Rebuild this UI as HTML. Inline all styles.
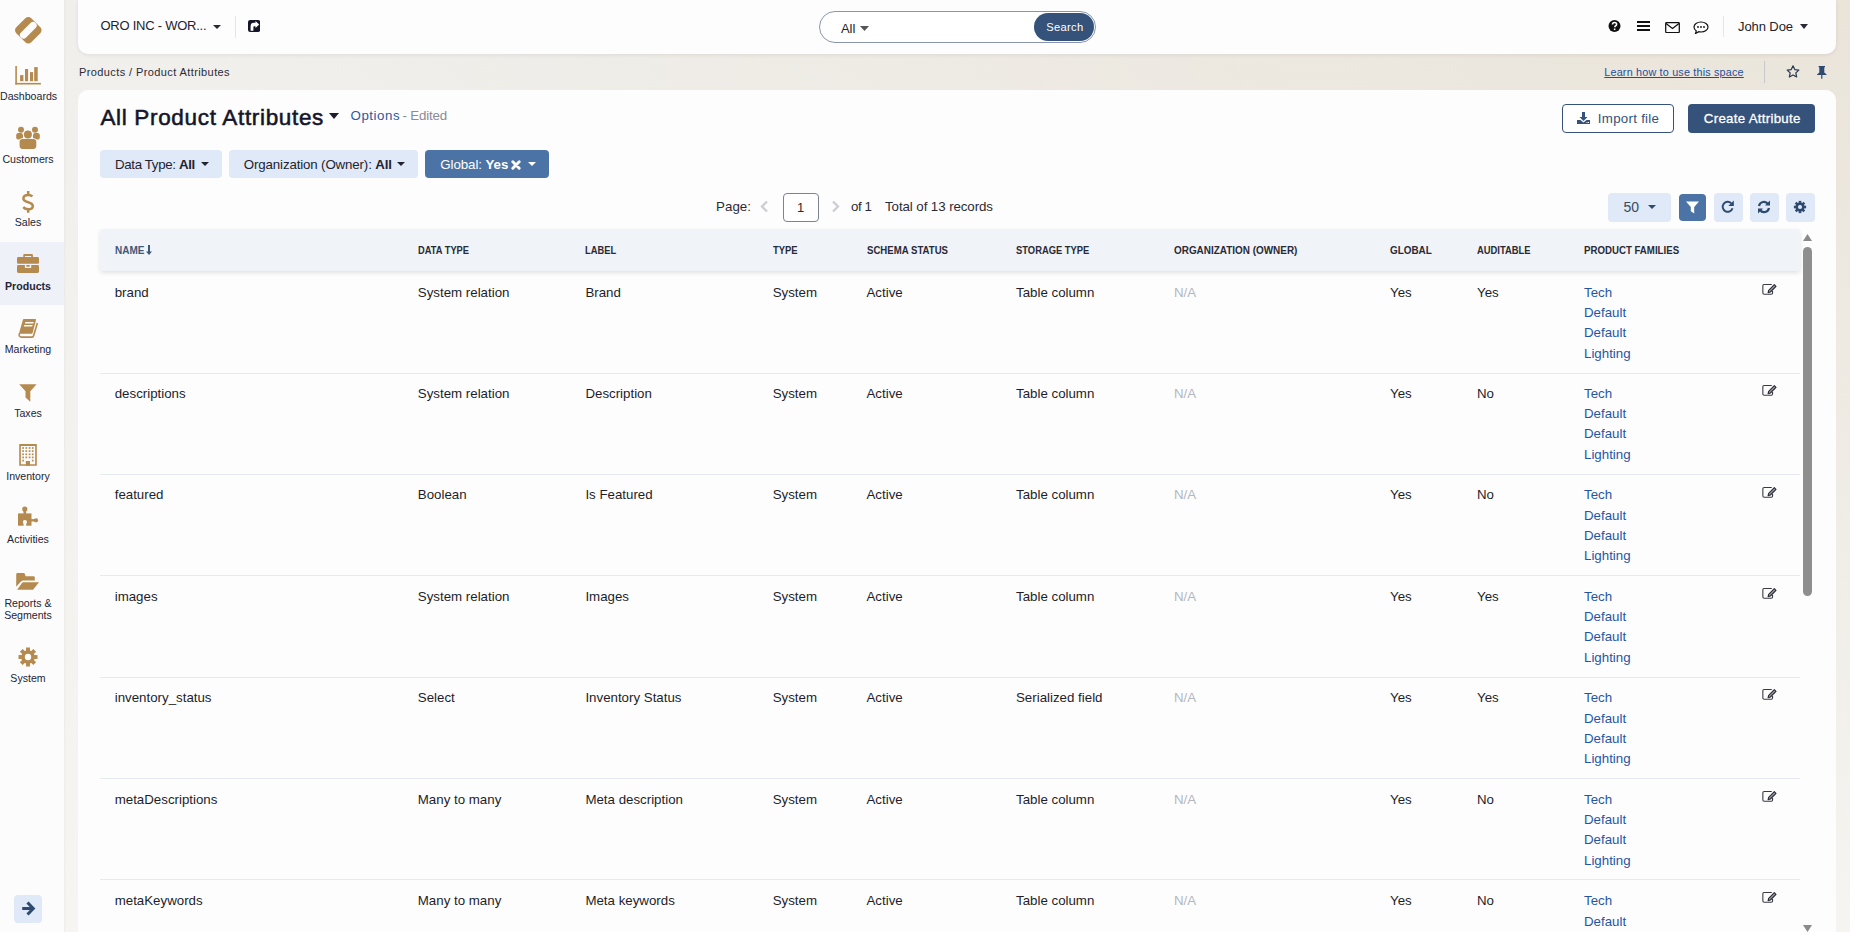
<!DOCTYPE html><html><head><meta charset="utf-8"><style>
*{box-sizing:border-box;margin:0;padding:0}
html,body{width:1850px;height:932px;overflow:hidden}
body{font-family:"Liberation Sans",sans-serif;color:#1d1d2b;background:radial-gradient(ellipse 120% 140% at 100% 0%,rgba(222,205,178,.32) 0%,rgba(222,205,178,0) 75%),linear-gradient(180deg,#f0efec 0%,#f6f5f2 100%);position:relative}
.abs{position:absolute}
.t{position:absolute;white-space:nowrap;line-height:1}
#side{position:absolute;left:0;top:0;width:64px;height:932px;background:#fcfcfc;box-shadow:1px 0 2px rgba(0,0,0,.04)}
.mi{position:absolute;left:0;width:64px;text-align:center}
.ml{position:absolute;left:0;width:56px;text-align:center;font-size:10.6px;color:#252535;line-height:12px;white-space:nowrap}
#hdr{position:absolute;left:78px;top:0;width:1758px;height:54px;background:#fdfdfd;border-radius:0 0 10px 10px;box-shadow:0 1px 4px rgba(0,0,0,.08)}
#card{position:absolute;left:78px;top:90px;width:1758px;height:860px;background:#fdfdfd;border-radius:10px 10px 0 0}
.btnl{position:absolute;background:#dfe9f7;border-radius:4px}
.hd{position:absolute;top:0;font-size:10px;font-weight:bold;color:#2a2a35;letter-spacing:-0.2px;white-space:nowrap;line-height:1}
.cell{position:absolute;font-size:13.3px;white-space:nowrap;line-height:1;color:#1d1d2b}
.sep{position:absolute;left:100px;width:1700px;height:1px;background:#e7eaf0}
</style></head><body>
<div id="side">
<svg class="abs" style="left:0px;top:0px" width="64" height="60" viewBox="0 0 64 60">
<rect x="17.7" y="19.6" width="21.2" height="21.2" rx="4.2" transform="rotate(45 28.3 30.2)" fill="#b58a4f"/>
<rect x="18.0" y="26.6" width="20.6" height="7.2" rx="3.6" transform="rotate(-45 28.3 30.2)" fill="#fcfcfc"/></svg>
<div class="abs" style="left:0;top:242px;width:64px;height:63px;background:#eef2f8"></div>
<div class="ml" style="top:90.4px;font-weight:normal">Dashboards</div>
<div class="ml" style="top:153.4px;font-weight:normal">Customers</div>
<div class="ml" style="top:216.4px;font-weight:normal">Sales</div>
<div class="ml" style="top:280.4px;font-weight:bold">Products</div>
<div class="ml" style="top:343.4px;font-weight:normal">Marketing</div>
<div class="ml" style="top:407.4px;font-weight:normal">Taxes</div>
<div class="ml" style="top:470.4px;font-weight:normal">Inventory</div>
<div class="ml" style="top:533.4px;font-weight:normal">Activities</div>
<div class="ml" style="top:596.9px">Reports &amp;</div>
<div class="ml" style="top:609.4px">Segments</div>
<div class="ml" style="top:672.0px">System</div>
<svg class="abs" style="left:15px;top:65px" width="27" height="21" viewBox="0 0 27 21" fill="#b58a4f">
<rect x="0.3" y="1" width="1.6" height="18.5"/><rect x="0.3" y="17.9" width="25.6" height="1.6"/>
<rect x="5.1" y="10.1" width="3.3" height="6.1"/><rect x="10" y="4" width="3.1" height="12.2"/><rect x="15" y="7.1" width="3.1" height="9.1"/><rect x="19.2" y="2.1" width="3.5" height="14.1"/></svg>
<svg class="abs" style="left:12px;top:122px" width="32" height="30" viewBox="0 0 32 30">
<g fill="#b58a4f"><circle cx="9" cy="7.7" r="3"/><circle cx="23" cy="7.7" r="3"/>
<rect x="4.2" y="11.1" width="6.8" height="6.5" rx="2.2"/><rect x="21" y="11.1" width="6.8" height="6.5" rx="2.2"/></g>
<circle cx="15.9" cy="12.6" r="5" fill="#fcfcfc"/><rect x="6.8" y="16.2" width="18.3" height="11.5" rx="3.6" fill="#fcfcfc"/>
<g fill="#b58a4f"><circle cx="15.9" cy="12.6" r="4"/><rect x="7.6" y="17" width="16.7" height="9.9" rx="2.8"/></g></svg>
<svg class="abs" style="left:12px;top:188px" width="32" height="28" viewBox="0 0 32 28" fill="none" stroke="#b58a4f" stroke-width="2.5">
<path d="M20.4 8.4C19.3 7.3 17.9 6.9 16.2 6.9C13.6 6.9 11.4 8.2 11.4 10.6C11.4 13 13.6 13.6 16.2 14.3C19 15.1 20.8 16 20.8 18.3C20.8 20.6 18.6 21.3 16.2 21.3C14.3 21.3 12.5 20.6 11.2 19.1"/>
<path d="M16.2 2.9V6.9M16.2 21.3V24.8"/></svg>
<svg class="abs" style="left:12px;top:250px" width="32" height="28" viewBox="0 0 32 28">
<g fill="#b58a4f"><path d="M11.3 7.2V4.8Q11.3 3.9 12.2 3.9H20Q20.9 3.9 20.9 4.8V7.2H19.2V5.9H12.9V7.2Z"/>
<rect x="5" y="7.1" width="22" height="6.7" rx="1.4"/><rect x="5" y="15" width="22" height="8" rx="1.4"/></g>
<rect x="12.9" y="14.1" width="6.3" height="3.9" fill="#eef2f8"/><rect x="14.4" y="15" width="3.3" height="1.7" fill="#b58a4f"/></svg>
<svg class="abs" style="left:12px;top:314px" width="32" height="28" viewBox="0 0 32 28">
<path d="M11.9 5H23.2Q24.2 5 24 6L20.6 19Q20.4 19.8 19.5 19.8H6.9L10.9 5.8Q11.1 5 11.9 5Z" fill="#b58a4f"/>
<path d="M7.5 19.2Q6.4 23.1 9.6 23.1H20.2Q21.2 23.1 21.5 22.1L25.4 9" stroke="#b58a4f" stroke-width="1.6" fill="none"/>
<path d="M13.3 8H21.7L21.35 9.4H12.95Z M12.2 11.1H20.6L20.2 12.6H11.8Z" fill="#fcfcfc"/></svg>
<svg class="abs" style="left:12px;top:378px" width="32" height="28" viewBox="0 0 32 28">
<path d="M7.2 6.2H24.6L18.3 13.2V23.7L13.5 19.5V13.2Z" fill="#b58a4f"/></svg>
<svg class="abs" style="left:12px;top:440px" width="32" height="28" viewBox="0 0 32 28">
<path d="M7.2 4.1H24.8V25.8H7.2Z M8.85 5.9V24.3H23.15V5.9Z" fill="#b58a4f" fill-rule="evenodd"/>
<g fill="#b58a4f"><rect x="10.25" y="7.15" width="1.7" height="1.7"/><rect x="13.45" y="7.15" width="1.7" height="1.7"/><rect x="16.75" y="7.15" width="1.7" height="1.7"/><rect x="19.85" y="7.15" width="1.7" height="1.7"/><rect x="10.25" y="10.25" width="1.7" height="1.7"/><rect x="13.45" y="10.25" width="1.7" height="1.7"/><rect x="16.75" y="10.25" width="1.7" height="1.7"/><rect x="19.85" y="10.25" width="1.7" height="1.7"/><rect x="10.25" y="13.45" width="1.7" height="1.7"/><rect x="13.45" y="13.45" width="1.7" height="1.7"/><rect x="16.75" y="13.45" width="1.7" height="1.7"/><rect x="19.85" y="13.45" width="1.7" height="1.7"/><rect x="10.25" y="16.55" width="1.7" height="1.7"/><rect x="13.45" y="16.55" width="1.7" height="1.7"/><rect x="16.75" y="16.55" width="1.7" height="1.7"/><rect x="19.85" y="16.55" width="1.7" height="1.7"/><rect x="10.25" y="19.75" width="1.7" height="1.7"/><rect x="19.85" y="19.75" width="1.7" height="1.7"/><rect x="13.8" y="21" width="4.2" height="4.8"/></g></svg>
<svg class="abs" style="left:12px;top:502px" width="32" height="28" viewBox="0 0 32 28">
<g fill="#b58a4f"><rect x="6" y="11.4" width="13.5" height="12.3"/><circle cx="12.8" cy="7.1" r="2.6"/><rect x="11.5" y="8.5" width="2.6" height="3.5"/>
<circle cx="24" cy="18.3" r="2.1"/><rect x="19" y="17.1" width="4" height="2.4"/></g>
<circle cx="12.9" cy="20" r="2.1" fill="#fcfcfc"/><rect x="11.6" y="20" width="2.6" height="4" fill="#fcfcfc"/></svg>
<svg class="abs" style="left:12px;top:566px" width="32" height="28" viewBox="0 0 32 28" fill="#b58a4f">
<path d="M4.2 8.5Q4.2 7.1 5.6 7.1H11.8Q12.5 7.1 12.9 8L13.6 10.2H21.5Q22.8 10.2 22.8 11.5V14.4H11.5Q10 14.4 9 15.5L4.2 20.7Z"/>
<path d="M11.3 16.2H27L21 23.7H5.1L10 17Q10.5 16.2 11.3 16.2Z"/></svg>
<svg class="abs" style="left:18px;top:647px" width="20" height="20" viewBox="-10 -10 20 20">
<g fill="#b58a4f"><circle r="6.8"/><rect x="-1.95" y="-9.5" width="3.9" height="5" transform="rotate(0)"/><rect x="-1.95" y="-9.5" width="3.9" height="5" transform="rotate(45)"/><rect x="-1.95" y="-9.5" width="3.9" height="5" transform="rotate(90)"/><rect x="-1.95" y="-9.5" width="3.9" height="5" transform="rotate(135)"/><rect x="-1.95" y="-9.5" width="3.9" height="5" transform="rotate(180)"/><rect x="-1.95" y="-9.5" width="3.9" height="5" transform="rotate(225)"/><rect x="-1.95" y="-9.5" width="3.9" height="5" transform="rotate(270)"/><rect x="-1.95" y="-9.5" width="3.9" height="5" transform="rotate(315)"/></g><circle r="3.2" fill="#fcfcfc"/></svg>
<div class="abs" style="left:14px;top:895px;width:28px;height:28px;background:#dfe9f7;border-radius:4px"></div>
<svg class="abs" style="left:14px;top:895px" width="28" height="28" viewBox="0 0 28 28"><path d="M8.2 13.5H18.5M13.5 7.5L19.3 13.5L13.5 19.5" stroke="#2f4a70" stroke-width="3" fill="none"/></svg>
</div>
<div id="hdr"></div>
<div class="t" style="left:100.5px;top:19.49px;font-size:13px;color:#23232f;font-weight:normal;letter-spacing:-0.252px;">ORO INC - WOR...</div>
<svg class="abs" style="left:213px;top:25px" width="8" height="4"><path d="M0 0h8l-4 4z" fill="#2a2a35"/></svg>
<div class="abs" style="left:235px;top:16px;width:1px;height:22px;background:#e5e6ea"></div>
<svg class="abs" style="left:247.7px;top:19.9px" width="12.2" height="12" viewBox="0 0 12.2 12"><rect width="12.2" height="12" rx="2.2" fill="#15152a"/>
<path d="M2.6 10.8V6.2Q2.6 2.8 6 2.8H7.5V1L11.2 4.5L7.5 8V6.2H6.3Q5.4 6.2 5.4 7.1V10.8Z" fill="#fff"/></svg>
<div class="abs" style="left:819px;top:11px;width:277px;height:32px;border:1px solid #8a95ad;border-radius:16px;background:#fff"></div>
<div class="t" style="left:841px;top:21.69px;font-size:13px;color:#23232f;font-weight:normal;letter-spacing:-0.077px;">All</div>
<svg class="abs" style="left:860px;top:26px" width="9" height="5"><path d="M0 0h9l-4.5 5z" fill="#555"/></svg>
<div class="abs" style="left:1034px;top:13px;width:60px;height:28px;border-radius:14px;background:#34527a"></div>
<div class="t" style="left:1046.2px;top:21.85px;font-size:11.2px;color:#fff;font-weight:normal;letter-spacing:0.309px;">Search</div>
<svg class="abs" style="left:1608px;top:20px" width="13" height="12" viewBox="0 0 13 13"><circle cx="6.5" cy="6.5" r="6.5" fill="#111"/>
<path d="M4.3 5q0-2.3 2.3-2.3q2.2 0 2.2 2q0 1.2-1.3 1.8q-0.6 0.3-0.6 1v0.4" stroke="#fff" stroke-width="1.7" fill="none"/><rect x="5.8" y="9.2" width="1.7" height="1.7" fill="#fff"/></svg>
<svg class="abs" style="left:1637px;top:21px" width="13" height="10" viewBox="0 0 13 10"><rect y="0" width="13" height="2" fill="#111"/><rect y="4" width="13" height="2" fill="#111"/><rect y="8" width="13" height="2" fill="#111"/></svg>
<svg class="abs" style="left:1665px;top:22px" width="15" height="11" viewBox="0 0 15 11"><rect x="0.7" y="0.7" width="13.6" height="9.8" rx="0.8" stroke="#111" stroke-width="1.25" fill="none"/><path d="M1 1.4l6.5 5l6.5-5" stroke="#111" stroke-width="1.25" fill="none"/></svg>
<svg class="abs" style="left:1693px;top:21px" width="16" height="13" viewBox="0 0 16 13"><path d="M8 1c4 0 7 2.2 7 5s-3 5-7 5c-0.8 0-1.5-0.1-2.2-0.3l-3.3 1.8l0.8-2.6c-1.4-0.9-2.3-2.3-2.3-3.9c0-2.8 3-5 7-5z" stroke="#111" stroke-width="1.2" fill="none"/>
<circle cx="5" cy="6" r="0.9" fill="#111"/><circle cx="8" cy="6" r="0.9" fill="#111"/><circle cx="11" cy="6" r="0.9" fill="#111"/></svg>
<div class="abs" style="left:1723px;top:16px;width:1px;height:21px;background:#e5e6ea"></div>
<div class="t" style="left:1738px;top:19.59px;font-size:13px;color:#23232f;font-weight:normal;letter-spacing:-0.094px;">John Doe</div>
<svg class="abs" style="left:1800px;top:24px" width="8" height="5"><path d="M0 0h8l-4 5z" fill="#2a2a35"/></svg>
<div class="t" style="left:79px;top:67.02px;font-size:11px;color:#2b2b37;font-weight:normal;letter-spacing:0.400px;">Products / Product Attributes</div>
<div class="t" style="left:1604.3px;top:66.59px;font-size:10.8px;color:#1f4f9a;font-weight:normal;text-decoration:underline;letter-spacing:0.186px;">Learn how to use this space</div>
<div class="abs" style="left:1764px;top:61px;width:1px;height:22px;background:#c8c8cc"></div>
<svg class="abs" style="left:1786px;top:65px" width="14" height="13" viewBox="0 0 24 23"><path d="M12 1.5l3.1 6.6l7.2 0.9l-5.3 5l1.4 7.1l-6.4-3.5l-6.4 3.5l1.4-7.1l-5.3-5l7.2-0.9z" stroke="#2a3a55" stroke-width="2.2" fill="none" stroke-linejoin="round"/></svg>
<svg class="abs" style="left:1817.2px;top:66px" width="9.6" height="13" viewBox="0 0 9.6 13"><path d="M1.6 0H8V1.3H7.3V6.6L9.6 8.4V9H5.4V12.6L4.8 13L4.2 12.6V9H0V8.4L2.3 6.6V1.3H1.6Z" fill="#2f4a70"/></svg>
<div id="card"></div>
<div class="t" style="left:100.4px;top:106.81px;font-size:22.5px;color:#15152a;font-weight:normal;-webkit-text-stroke:0.55px #15152a;letter-spacing:0.673px;">All Product Attributes</div>
<svg class="abs" style="left:329px;top:113px" width="10" height="6"><path d="M0 0h10l-5 6z" fill="#1d1d2b"/></svg>
<div class="t" style="left:350.5px;top:108.84px;font-size:13.3px;color:#2a5aa0;font-weight:normal;letter-spacing:0.545px;">Options</div>
<div class="t" style="left:402.4px;top:108.84px;font-size:13.3px;color:#8b8b95;font-weight:normal;letter-spacing:-0.147px;">- Edited</div>
<div class="abs" style="left:1562px;top:104px;width:112px;height:29px;border:1.4px solid #34527a;border-radius:4px;background:#fff"></div>
<svg class="abs" style="left:1577px;top:112px" width="13" height="12" viewBox="0 0 13 12"><path d="M5 0h3v5h2.5l-4 4l-4-4h2.5z" fill="#34527a"/><path d="M0 8h3.5l3 2.5l3-2.5h3.5v4h-13z" fill="#34527a"/><rect x="9.5" y="10" width="1" height="1" fill="#fff"/><rect x="11" y="10" width="1" height="1" fill="#fff"/></svg>
<div class="t" style="left:1597.8px;top:111.54px;font-size:13.3px;color:#34527a;font-weight:normal;letter-spacing:0.281px;">Import file</div>
<div class="abs" style="left:1688px;top:104px;width:127px;height:29px;border-radius:4px;background:#34527a"></div>
<div class="t" style="left:1703.8px;top:111.74px;font-size:13.3px;color:#fff;font-weight:normal;-webkit-text-stroke:0.3px #fff;letter-spacing:0.281px;">Create Attribute</div>
<div class="btnl" style="left:100px;top:150px;width:122px;height:28px"></div>
<div class="t" style="left:115.1px;top:158.14px;font-size:13.3px;color:#23232f;font-weight:normal;letter-spacing:-0.359px;">Data Type: <b>All</b></div>
<svg class="abs" style="left:201px;top:162px" width="8" height="4"><path d="M0 0h8l-4 4z" fill="#23232f"/></svg>
<div class="btnl" style="left:229px;top:150px;width:189px;height:28px"></div>
<div class="t" style="left:243.8px;top:158.14px;font-size:13.3px;color:#23232f;font-weight:normal;letter-spacing:-0.138px;">Organization (Owner): <b>All</b></div>
<svg class="abs" style="left:397px;top:162px" width="8" height="4"><path d="M0 0h8l-4 4z" fill="#23232f"/></svg>
<div class="abs" style="left:425px;top:150px;width:124px;height:28px;background:#4b73a6;border-radius:4px"></div>
<div class="t" style="left:440.3px;top:158.14px;font-size:13.3px;color:#fff;font-weight:normal;letter-spacing:-0.077px;">Global: <b>Yes</b></div>
<svg class="abs" style="left:511px;top:160px" width="10" height="10" viewBox="0 0 10 10"><path d="M1.8 1.8L8.2 8.2M8.2 1.8L1.8 8.2" stroke="#fff" stroke-width="2.9" stroke-linecap="round"/></svg>
<svg class="abs" style="left:528px;top:162px" width="8" height="4"><path d="M0 0h8l-4 4z" fill="#fff"/></svg>
<div class="t" style="left:716px;top:200.44px;font-size:13.3px;color:#2a2a35;font-weight:normal;letter-spacing:0.062px;">Page:</div>
<svg class="abs" style="left:760px;top:200px" width="9" height="13" viewBox="0 0 9 13"><path d="M7 1.5l-5 5l5 5" stroke="#cbced4" stroke-width="2.3" fill="none"/></svg>
<div class="abs" style="left:783px;top:193px;width:36px;height:29px;border:1px solid #7a8499;border-radius:4px;background:#fff"></div>
<div class="t" style="left:797px;top:200.79px;font-size:13px;color:#2a2a35;font-weight:normal;">1</div>
<svg class="abs" style="left:831px;top:200px" width="9" height="13" viewBox="0 0 9 13"><path d="M2 1.5l5 5l-5 5" stroke="#cbced4" stroke-width="2.3" fill="none"/></svg>
<div class="t" style="left:851px;top:200.44px;font-size:13.3px;color:#2a2a35;font-weight:normal;letter-spacing:-0.396px;">of 1</div>
<div class="t" style="left:885px;top:200.44px;font-size:13.3px;color:#2a2a35;font-weight:normal;letter-spacing:-0.077px;">Total of 13 records</div>
<div class="btnl" style="left:1608px;top:193px;width:63px;height:29px"></div>
<div class="t" style="left:1623.4px;top:199.93px;font-size:14px;color:#3a4a60;font-weight:normal;">50</div>
<svg class="abs" style="left:1648px;top:205px" width="8" height="4"><path d="M0 0h8l-4 4z" fill="#2f4a70"/></svg>
<div class="abs" style="left:1679px;top:194px;width:27px;height:27px;background:#4b73a6;border-radius:4px"></div>
<svg class="abs" style="left:1686px;top:201px" width="13" height="13" viewBox="0 0 13 13"><path d="M0 0.5h13l-4.8 5.5v6.5l-3.4-2.3v-4.2z" fill="#fff"/></svg>
<div class="btnl" style="left:1714px;top:193px;width:29px;height:29px"></div>
<div class="btnl" style="left:1750px;top:193px;width:29px;height:29px"></div>
<div class="btnl" style="left:1786px;top:193px;width:29px;height:29px"></div>
<svg class="abs" style="left:1721px;top:200px" width="14" height="14" viewBox="0 0 14 14"><path d="M11.5 8.2a5 5 0 1 1-1.3-5" stroke="#2f4a70" stroke-width="1.9" fill="none"/><path d="M12.8 0.5v5.5h-5.5z" fill="#2f4a70"/></svg>
<svg class="abs" style="left:1757px;top:200px" width="14" height="14" viewBox="0 0 14 14"><path d="M2 6a5 5 0 0 1 9-2" stroke="#2f4a70" stroke-width="2.2" fill="none"/><path d="M13 0.5v5h-5z" fill="#2f4a70"/><path d="M12 8a5 5 0 0 1-9 2" stroke="#2f4a70" stroke-width="2.2" fill="none"/><path d="M1 13.5v-5h5z" fill="#2f4a70"/></svg>
<svg class="abs" style="left:1793px;top:200px" width="14" height="14" viewBox="-7 -7 14 14">
<g fill="#2f4a70"><circle r="4.5"/><rect x="-1.3" y="-6.1" width="2.6" height="3" transform="rotate(0)"/><rect x="-1.3" y="-6.1" width="2.6" height="3" transform="rotate(45)"/><rect x="-1.3" y="-6.1" width="2.6" height="3" transform="rotate(90)"/><rect x="-1.3" y="-6.1" width="2.6" height="3" transform="rotate(135)"/><rect x="-1.3" y="-6.1" width="2.6" height="3" transform="rotate(180)"/><rect x="-1.3" y="-6.1" width="2.6" height="3" transform="rotate(225)"/><rect x="-1.3" y="-6.1" width="2.6" height="3" transform="rotate(270)"/><rect x="-1.3" y="-6.1" width="2.6" height="3" transform="rotate(315)"/></g><circle r="2" fill="#dfe9f7"/></svg>

<div class="abs" style="left:100px;top:229px;width:1700px;height:42px;background:#f0f3f8;border-radius:3px;box-shadow:0 2px 4px rgba(0,0,0,.11)"></div>
<div class="t" style="left:114.7px;top:245.71px;font-size:10.2px;color:#3d5878;font-weight:bold;transform:scaleX(0.9800);transform-origin:0 0;">NAME</div>
<div class="t" style="left:417.8px;top:245.71px;font-size:10.2px;color:#2a2a35;font-weight:bold;transform:scaleX(0.9133);transform-origin:0 0;">DATA TYPE</div>
<div class="t" style="left:585.4px;top:245.71px;font-size:10.2px;color:#2a2a35;font-weight:bold;transform:scaleX(0.9155);transform-origin:0 0;">LABEL</div>
<div class="t" style="left:772.7px;top:245.71px;font-size:10.2px;color:#2a2a35;font-weight:bold;transform:scaleX(0.9245);transform-origin:0 0;">TYPE</div>
<div class="t" style="left:866.5px;top:245.71px;font-size:10.2px;color:#2a2a35;font-weight:bold;transform:scaleX(0.9436);transform-origin:0 0;">SCHEMA STATUS</div>
<div class="t" style="left:1016px;top:245.71px;font-size:10.2px;color:#2a2a35;font-weight:bold;transform:scaleX(0.9216);transform-origin:0 0;">STORAGE TYPE</div>
<div class="t" style="left:1174px;top:245.71px;font-size:10.2px;color:#2a2a35;font-weight:bold;transform:scaleX(0.9749);transform-origin:0 0;">ORGANIZATION (OWNER)</div>
<div class="t" style="left:1390px;top:245.71px;font-size:10.2px;color:#2a2a35;font-weight:bold;transform:scaleX(0.9694);transform-origin:0 0;">GLOBAL</div>
<div class="t" style="left:1477px;top:245.71px;font-size:10.2px;color:#2a2a35;font-weight:bold;transform:scaleX(0.9224);transform-origin:0 0;">AUDITABLE</div>
<div class="t" style="left:1584px;top:245.71px;font-size:10.2px;color:#2a2a35;font-weight:bold;transform:scaleX(0.9492);transform-origin:0 0;">PRODUCT FAMILIES</div>
<svg class="abs" style="left:146px;top:245px" width="6" height="10" viewBox="0 0 6 10"><path d="M2 0h2v6.5h2l-3 3.5l-3-3.5h2z" fill="#3d5878"/></svg>
<div class="t" style="left:114.7px;top:285.94px;font-size:13.3px;color:#1d1d2b;font-weight:normal;">brand</div>
<div class="t" style="left:417.8px;top:285.94px;font-size:13.3px;color:#1d1d2b;font-weight:normal;">System relation</div>
<div class="t" style="left:585.4px;top:285.94px;font-size:13.3px;color:#1d1d2b;font-weight:normal;">Brand</div>
<div class="t" style="left:772.7px;top:285.94px;font-size:13.3px;color:#1d1d2b;font-weight:normal;">System</div>
<div class="t" style="left:866.5px;top:285.94px;font-size:13.3px;color:#1d1d2b;font-weight:normal;">Active</div>
<div class="t" style="left:1016px;top:285.94px;font-size:13.3px;color:#1d1d2b;font-weight:normal;">Table column</div>
<div class="t" style="left:1174px;top:285.94px;font-size:13.3px;color:#b3b7bf;font-weight:normal;">N/A</div>
<div class="t" style="left:1390px;top:285.94px;font-size:13.3px;color:#1d1d2b;font-weight:normal;">Yes</div>
<div class="t" style="left:1477px;top:285.94px;font-size:13.3px;color:#1d1d2b;font-weight:normal;">Yes</div>
<div class="t" style="left:1584px;top:285.94px;font-size:13.3px;color:#1f56a5;font-weight:normal;">Tech</div>
<div class="t" style="left:1584px;top:306.34px;font-size:13.3px;color:#1f56a5;font-weight:normal;">Default</div>
<div class="t" style="left:1584px;top:326.44px;font-size:13.3px;color:#1f56a5;font-weight:normal;">Default</div>
<div class="t" style="left:1584px;top:346.94px;font-size:13.3px;color:#1f56a5;font-weight:normal;">Lighting</div>
<svg class="abs" style="left:1756px;top:278.2px" width="28" height="24" viewBox="0 0 28 24"><path d="M15.8 6.45H8.1Q6.85 6.45 6.85 7.7V15Q6.85 16.25 8.1 16.25H15.3Q16.55 16.25 16.55 15V13.1" stroke="#3a3a44" stroke-width="1.1" fill="none"/><path d="M12.1 14.6L12.7 12.3L18.3 6.7L20 8.4L14.4 14Z" stroke="#2a2a35" stroke-width="1.1" fill="#9a9aa5" stroke-linejoin="round"/></svg>
<div class="sep" style="top:373.0px"></div>
<div class="t" style="left:114.7px;top:386.84px;font-size:13.3px;color:#1d1d2b;font-weight:normal;">descriptions</div>
<div class="t" style="left:417.8px;top:386.84px;font-size:13.3px;color:#1d1d2b;font-weight:normal;">System relation</div>
<div class="t" style="left:585.4px;top:386.84px;font-size:13.3px;color:#1d1d2b;font-weight:normal;">Description</div>
<div class="t" style="left:772.7px;top:386.84px;font-size:13.3px;color:#1d1d2b;font-weight:normal;">System</div>
<div class="t" style="left:866.5px;top:386.84px;font-size:13.3px;color:#1d1d2b;font-weight:normal;">Active</div>
<div class="t" style="left:1016px;top:386.84px;font-size:13.3px;color:#1d1d2b;font-weight:normal;">Table column</div>
<div class="t" style="left:1174px;top:386.84px;font-size:13.3px;color:#b3b7bf;font-weight:normal;">N/A</div>
<div class="t" style="left:1390px;top:386.84px;font-size:13.3px;color:#1d1d2b;font-weight:normal;">Yes</div>
<div class="t" style="left:1477px;top:386.84px;font-size:13.3px;color:#1d1d2b;font-weight:normal;">No</div>
<div class="t" style="left:1584px;top:386.84px;font-size:13.3px;color:#1f56a5;font-weight:normal;">Tech</div>
<div class="t" style="left:1584px;top:407.24px;font-size:13.3px;color:#1f56a5;font-weight:normal;">Default</div>
<div class="t" style="left:1584px;top:427.34px;font-size:13.3px;color:#1f56a5;font-weight:normal;">Default</div>
<div class="t" style="left:1584px;top:447.84px;font-size:13.3px;color:#1f56a5;font-weight:normal;">Lighting</div>
<svg class="abs" style="left:1756px;top:379.1px" width="28" height="24" viewBox="0 0 28 24"><path d="M15.8 6.45H8.1Q6.85 6.45 6.85 7.7V15Q6.85 16.25 8.1 16.25H15.3Q16.55 16.25 16.55 15V13.1" stroke="#3a3a44" stroke-width="1.1" fill="none"/><path d="M12.1 14.6L12.7 12.3L18.3 6.7L20 8.4L14.4 14Z" stroke="#2a2a35" stroke-width="1.1" fill="#9a9aa5" stroke-linejoin="round"/></svg>
<div class="sep" style="top:474.0px"></div>
<div class="t" style="left:114.7px;top:488.34px;font-size:13.3px;color:#1d1d2b;font-weight:normal;">featured</div>
<div class="t" style="left:417.8px;top:488.34px;font-size:13.3px;color:#1d1d2b;font-weight:normal;">Boolean</div>
<div class="t" style="left:585.4px;top:488.34px;font-size:13.3px;color:#1d1d2b;font-weight:normal;">Is Featured</div>
<div class="t" style="left:772.7px;top:488.34px;font-size:13.3px;color:#1d1d2b;font-weight:normal;">System</div>
<div class="t" style="left:866.5px;top:488.34px;font-size:13.3px;color:#1d1d2b;font-weight:normal;">Active</div>
<div class="t" style="left:1016px;top:488.34px;font-size:13.3px;color:#1d1d2b;font-weight:normal;">Table column</div>
<div class="t" style="left:1174px;top:488.34px;font-size:13.3px;color:#b3b7bf;font-weight:normal;">N/A</div>
<div class="t" style="left:1390px;top:488.34px;font-size:13.3px;color:#1d1d2b;font-weight:normal;">Yes</div>
<div class="t" style="left:1477px;top:488.34px;font-size:13.3px;color:#1d1d2b;font-weight:normal;">No</div>
<div class="t" style="left:1584px;top:488.34px;font-size:13.3px;color:#1f56a5;font-weight:normal;">Tech</div>
<div class="t" style="left:1584px;top:508.74px;font-size:13.3px;color:#1f56a5;font-weight:normal;">Default</div>
<div class="t" style="left:1584px;top:528.84px;font-size:13.3px;color:#1f56a5;font-weight:normal;">Default</div>
<div class="t" style="left:1584px;top:549.34px;font-size:13.3px;color:#1f56a5;font-weight:normal;">Lighting</div>
<svg class="abs" style="left:1756px;top:480.6px" width="28" height="24" viewBox="0 0 28 24"><path d="M15.8 6.45H8.1Q6.85 6.45 6.85 7.7V15Q6.85 16.25 8.1 16.25H15.3Q16.55 16.25 16.55 15V13.1" stroke="#3a3a44" stroke-width="1.1" fill="none"/><path d="M12.1 14.6L12.7 12.3L18.3 6.7L20 8.4L14.4 14Z" stroke="#2a2a35" stroke-width="1.1" fill="#9a9aa5" stroke-linejoin="round"/></svg>
<div class="sep" style="top:575.0px"></div>
<div class="t" style="left:114.7px;top:589.84px;font-size:13.3px;color:#1d1d2b;font-weight:normal;">images</div>
<div class="t" style="left:417.8px;top:589.84px;font-size:13.3px;color:#1d1d2b;font-weight:normal;">System relation</div>
<div class="t" style="left:585.4px;top:589.84px;font-size:13.3px;color:#1d1d2b;font-weight:normal;">Images</div>
<div class="t" style="left:772.7px;top:589.84px;font-size:13.3px;color:#1d1d2b;font-weight:normal;">System</div>
<div class="t" style="left:866.5px;top:589.84px;font-size:13.3px;color:#1d1d2b;font-weight:normal;">Active</div>
<div class="t" style="left:1016px;top:589.84px;font-size:13.3px;color:#1d1d2b;font-weight:normal;">Table column</div>
<div class="t" style="left:1174px;top:589.84px;font-size:13.3px;color:#b3b7bf;font-weight:normal;">N/A</div>
<div class="t" style="left:1390px;top:589.84px;font-size:13.3px;color:#1d1d2b;font-weight:normal;">Yes</div>
<div class="t" style="left:1477px;top:589.84px;font-size:13.3px;color:#1d1d2b;font-weight:normal;">Yes</div>
<div class="t" style="left:1584px;top:589.84px;font-size:13.3px;color:#1f56a5;font-weight:normal;">Tech</div>
<div class="t" style="left:1584px;top:610.24px;font-size:13.3px;color:#1f56a5;font-weight:normal;">Default</div>
<div class="t" style="left:1584px;top:630.34px;font-size:13.3px;color:#1f56a5;font-weight:normal;">Default</div>
<div class="t" style="left:1584px;top:650.84px;font-size:13.3px;color:#1f56a5;font-weight:normal;">Lighting</div>
<svg class="abs" style="left:1756px;top:582.1px" width="28" height="24" viewBox="0 0 28 24"><path d="M15.8 6.45H8.1Q6.85 6.45 6.85 7.7V15Q6.85 16.25 8.1 16.25H15.3Q16.55 16.25 16.55 15V13.1" stroke="#3a3a44" stroke-width="1.1" fill="none"/><path d="M12.1 14.6L12.7 12.3L18.3 6.7L20 8.4L14.4 14Z" stroke="#2a2a35" stroke-width="1.1" fill="#9a9aa5" stroke-linejoin="round"/></svg>
<div class="sep" style="top:677.0px"></div>
<div class="t" style="left:114.7px;top:691.14px;font-size:13.3px;color:#1d1d2b;font-weight:normal;">inventory_status</div>
<div class="t" style="left:417.8px;top:691.14px;font-size:13.3px;color:#1d1d2b;font-weight:normal;">Select</div>
<div class="t" style="left:585.4px;top:691.14px;font-size:13.3px;color:#1d1d2b;font-weight:normal;">Inventory Status</div>
<div class="t" style="left:772.7px;top:691.14px;font-size:13.3px;color:#1d1d2b;font-weight:normal;">System</div>
<div class="t" style="left:866.5px;top:691.14px;font-size:13.3px;color:#1d1d2b;font-weight:normal;">Active</div>
<div class="t" style="left:1016px;top:691.14px;font-size:13.3px;color:#1d1d2b;font-weight:normal;">Serialized field</div>
<div class="t" style="left:1174px;top:691.14px;font-size:13.3px;color:#b3b7bf;font-weight:normal;">N/A</div>
<div class="t" style="left:1390px;top:691.14px;font-size:13.3px;color:#1d1d2b;font-weight:normal;">Yes</div>
<div class="t" style="left:1477px;top:691.14px;font-size:13.3px;color:#1d1d2b;font-weight:normal;">Yes</div>
<div class="t" style="left:1584px;top:691.14px;font-size:13.3px;color:#1f56a5;font-weight:normal;">Tech</div>
<div class="t" style="left:1584px;top:711.54px;font-size:13.3px;color:#1f56a5;font-weight:normal;">Default</div>
<div class="t" style="left:1584px;top:731.64px;font-size:13.3px;color:#1f56a5;font-weight:normal;">Default</div>
<div class="t" style="left:1584px;top:752.14px;font-size:13.3px;color:#1f56a5;font-weight:normal;">Lighting</div>
<svg class="abs" style="left:1756px;top:683.4px" width="28" height="24" viewBox="0 0 28 24"><path d="M15.8 6.45H8.1Q6.85 6.45 6.85 7.7V15Q6.85 16.25 8.1 16.25H15.3Q16.55 16.25 16.55 15V13.1" stroke="#3a3a44" stroke-width="1.1" fill="none"/><path d="M12.1 14.6L12.7 12.3L18.3 6.7L20 8.4L14.4 14Z" stroke="#2a2a35" stroke-width="1.1" fill="#9a9aa5" stroke-linejoin="round"/></svg>
<div class="sep" style="top:778.0px"></div>
<div class="t" style="left:114.7px;top:792.84px;font-size:13.3px;color:#1d1d2b;font-weight:normal;">metaDescriptions</div>
<div class="t" style="left:417.8px;top:792.84px;font-size:13.3px;color:#1d1d2b;font-weight:normal;">Many to many</div>
<div class="t" style="left:585.4px;top:792.84px;font-size:13.3px;color:#1d1d2b;font-weight:normal;">Meta description</div>
<div class="t" style="left:772.7px;top:792.84px;font-size:13.3px;color:#1d1d2b;font-weight:normal;">System</div>
<div class="t" style="left:866.5px;top:792.84px;font-size:13.3px;color:#1d1d2b;font-weight:normal;">Active</div>
<div class="t" style="left:1016px;top:792.84px;font-size:13.3px;color:#1d1d2b;font-weight:normal;">Table column</div>
<div class="t" style="left:1174px;top:792.84px;font-size:13.3px;color:#b3b7bf;font-weight:normal;">N/A</div>
<div class="t" style="left:1390px;top:792.84px;font-size:13.3px;color:#1d1d2b;font-weight:normal;">Yes</div>
<div class="t" style="left:1477px;top:792.84px;font-size:13.3px;color:#1d1d2b;font-weight:normal;">No</div>
<div class="t" style="left:1584px;top:792.84px;font-size:13.3px;color:#1f56a5;font-weight:normal;">Tech</div>
<div class="t" style="left:1584px;top:813.24px;font-size:13.3px;color:#1f56a5;font-weight:normal;">Default</div>
<div class="t" style="left:1584px;top:833.34px;font-size:13.3px;color:#1f56a5;font-weight:normal;">Default</div>
<div class="t" style="left:1584px;top:853.84px;font-size:13.3px;color:#1f56a5;font-weight:normal;">Lighting</div>
<svg class="abs" style="left:1756px;top:785.1px" width="28" height="24" viewBox="0 0 28 24"><path d="M15.8 6.45H8.1Q6.85 6.45 6.85 7.7V15Q6.85 16.25 8.1 16.25H15.3Q16.55 16.25 16.55 15V13.1" stroke="#3a3a44" stroke-width="1.1" fill="none"/><path d="M12.1 14.6L12.7 12.3L18.3 6.7L20 8.4L14.4 14Z" stroke="#2a2a35" stroke-width="1.1" fill="#9a9aa5" stroke-linejoin="round"/></svg>
<div class="sep" style="top:879.0px"></div>
<div class="t" style="left:114.7px;top:894.14px;font-size:13.3px;color:#1d1d2b;font-weight:normal;">metaKeywords</div>
<div class="t" style="left:417.8px;top:894.14px;font-size:13.3px;color:#1d1d2b;font-weight:normal;">Many to many</div>
<div class="t" style="left:585.4px;top:894.14px;font-size:13.3px;color:#1d1d2b;font-weight:normal;">Meta keywords</div>
<div class="t" style="left:772.7px;top:894.14px;font-size:13.3px;color:#1d1d2b;font-weight:normal;">System</div>
<div class="t" style="left:866.5px;top:894.14px;font-size:13.3px;color:#1d1d2b;font-weight:normal;">Active</div>
<div class="t" style="left:1016px;top:894.14px;font-size:13.3px;color:#1d1d2b;font-weight:normal;">Table column</div>
<div class="t" style="left:1174px;top:894.14px;font-size:13.3px;color:#b3b7bf;font-weight:normal;">N/A</div>
<div class="t" style="left:1390px;top:894.14px;font-size:13.3px;color:#1d1d2b;font-weight:normal;">Yes</div>
<div class="t" style="left:1477px;top:894.14px;font-size:13.3px;color:#1d1d2b;font-weight:normal;">No</div>
<div class="t" style="left:1584px;top:894.14px;font-size:13.3px;color:#1f56a5;font-weight:normal;">Tech</div>
<div class="t" style="left:1584px;top:914.54px;font-size:13.3px;color:#1f56a5;font-weight:normal;">Default</div>
<div class="t" style="left:1584px;top:934.64px;font-size:13.3px;color:#1f56a5;font-weight:normal;">Default</div>
<div class="t" style="left:1584px;top:955.14px;font-size:13.3px;color:#1f56a5;font-weight:normal;">Lighting</div>
<svg class="abs" style="left:1756px;top:886.4px" width="28" height="24" viewBox="0 0 28 24"><path d="M15.8 6.45H8.1Q6.85 6.45 6.85 7.7V15Q6.85 16.25 8.1 16.25H15.3Q16.55 16.25 16.55 15V13.1" stroke="#3a3a44" stroke-width="1.1" fill="none"/><path d="M12.1 14.6L12.7 12.3L18.3 6.7L20 8.4L14.4 14Z" stroke="#2a2a35" stroke-width="1.1" fill="#9a9aa5" stroke-linejoin="round"/></svg>
<svg class="abs" style="left:1803px;top:234px" width="9" height="7"><path d="M0 7h9l-4.5-7z" fill="#8a8a8a"/></svg>
<div class="abs" style="left:1803px;top:247px;width:9px;height:349px;background:#8e8e8e;border-radius:5px"></div>
<svg class="abs" style="left:1803px;top:925px" width="9" height="7"><path d="M0 0h9l-4.5 7z" fill="#8a8a8a"/></svg>
</body></html>
